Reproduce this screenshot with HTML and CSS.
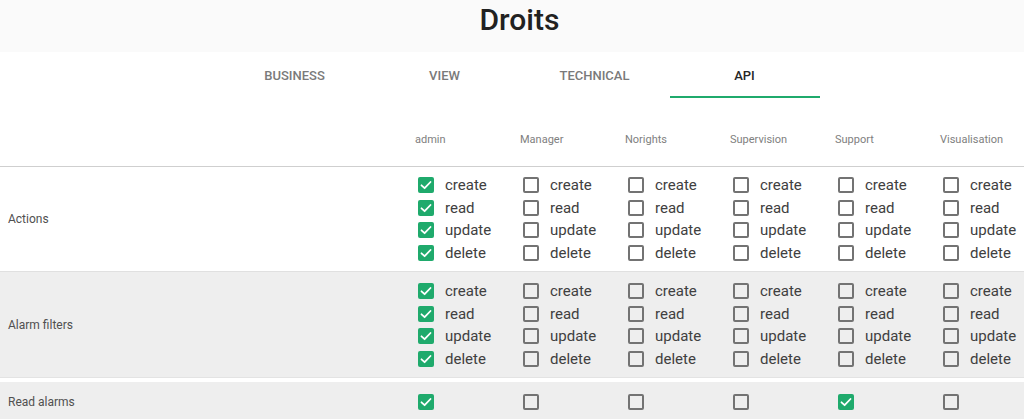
FILE: index.html
```html
<!DOCTYPE html>
<html lang="fr">
<head>
<meta charset="utf-8">
<title>Droits</title>
<link rel="stylesheet" href="styles.css">
</head>
<body>
<div class="page">
  <header class="title-bar"><h1 class="title">Droits</h1></header>
  <nav class="tabs">
    <div class="tab">BUSINESS</div>
    <div class="tab">VIEW</div>
    <div class="tab">TECHNICAL</div>
    <div class="tab active">API</div>
  </nav>
  <div class="table">
    <div class="row head">
      <div class="cell label"></div>
      <div class="cell hcell">admin</div>
      <div class="cell hcell">Manager</div>
      <div class="cell hcell">Norights</div>
      <div class="cell hcell">Supervision</div>
      <div class="cell hcell">Support</div>
      <div class="cell hcell">Visualisation</div>
    </div>

    <div class="row group">
      <div class="cell label">Actions</div>
      <div class="cell checks">
        <div class="item"><span class="box on"><svg viewBox="0 0 16 16"><polyline points="3.5,8.3 6.6,11.2 12.5,5"/></svg></span><span class="txt">create</span></div>
        <div class="item"><span class="box on"><svg viewBox="0 0 16 16"><polyline points="3.5,8.3 6.6,11.2 12.5,5"/></svg></span><span class="txt">read</span></div>
        <div class="item"><span class="box on"><svg viewBox="0 0 16 16"><polyline points="3.5,8.3 6.6,11.2 12.5,5"/></svg></span><span class="txt">update</span></div>
        <div class="item"><span class="box on"><svg viewBox="0 0 16 16"><polyline points="3.5,8.3 6.6,11.2 12.5,5"/></svg></span><span class="txt">delete</span></div>
      </div>
      <div class="cell checks">
        <div class="item"><span class="box"></span><span class="txt">create</span></div>
        <div class="item"><span class="box"></span><span class="txt">read</span></div>
        <div class="item"><span class="box"></span><span class="txt">update</span></div>
        <div class="item"><span class="box"></span><span class="txt">delete</span></div>
      </div>
      <div class="cell checks">
        <div class="item"><span class="box"></span><span class="txt">create</span></div>
        <div class="item"><span class="box"></span><span class="txt">read</span></div>
        <div class="item"><span class="box"></span><span class="txt">update</span></div>
        <div class="item"><span class="box"></span><span class="txt">delete</span></div>
      </div>
      <div class="cell checks">
        <div class="item"><span class="box"></span><span class="txt">create</span></div>
        <div class="item"><span class="box"></span><span class="txt">read</span></div>
        <div class="item"><span class="box"></span><span class="txt">update</span></div>
        <div class="item"><span class="box"></span><span class="txt">delete</span></div>
      </div>
      <div class="cell checks">
        <div class="item"><span class="box"></span><span class="txt">create</span></div>
        <div class="item"><span class="box"></span><span class="txt">read</span></div>
        <div class="item"><span class="box"></span><span class="txt">update</span></div>
        <div class="item"><span class="box"></span><span class="txt">delete</span></div>
      </div>
      <div class="cell checks">
        <div class="item"><span class="box"></span><span class="txt">create</span></div>
        <div class="item"><span class="box"></span><span class="txt">read</span></div>
        <div class="item"><span class="box"></span><span class="txt">update</span></div>
        <div class="item"><span class="box"></span><span class="txt">delete</span></div>
      </div>
    </div>

    <div class="row group shaded">
      <div class="cell label">Alarm filters</div>
      <div class="cell checks">
        <div class="item"><span class="box on"><svg viewBox="0 0 16 16"><polyline points="3.5,8.3 6.6,11.2 12.5,5"/></svg></span><span class="txt">create</span></div>
        <div class="item"><span class="box on"><svg viewBox="0 0 16 16"><polyline points="3.5,8.3 6.6,11.2 12.5,5"/></svg></span><span class="txt">read</span></div>
        <div class="item"><span class="box on"><svg viewBox="0 0 16 16"><polyline points="3.5,8.3 6.6,11.2 12.5,5"/></svg></span><span class="txt">update</span></div>
        <div class="item"><span class="box on"><svg viewBox="0 0 16 16"><polyline points="3.5,8.3 6.6,11.2 12.5,5"/></svg></span><span class="txt">delete</span></div>
      </div>
      <div class="cell checks">
        <div class="item"><span class="box"></span><span class="txt">create</span></div>
        <div class="item"><span class="box"></span><span class="txt">read</span></div>
        <div class="item"><span class="box"></span><span class="txt">update</span></div>
        <div class="item"><span class="box"></span><span class="txt">delete</span></div>
      </div>
      <div class="cell checks">
        <div class="item"><span class="box"></span><span class="txt">create</span></div>
        <div class="item"><span class="box"></span><span class="txt">read</span></div>
        <div class="item"><span class="box"></span><span class="txt">update</span></div>
        <div class="item"><span class="box"></span><span class="txt">delete</span></div>
      </div>
      <div class="cell checks">
        <div class="item"><span class="box"></span><span class="txt">create</span></div>
        <div class="item"><span class="box"></span><span class="txt">read</span></div>
        <div class="item"><span class="box"></span><span class="txt">update</span></div>
        <div class="item"><span class="box"></span><span class="txt">delete</span></div>
      </div>
      <div class="cell checks">
        <div class="item"><span class="box"></span><span class="txt">create</span></div>
        <div class="item"><span class="box"></span><span class="txt">read</span></div>
        <div class="item"><span class="box"></span><span class="txt">update</span></div>
        <div class="item"><span class="box"></span><span class="txt">delete</span></div>
      </div>
      <div class="cell checks">
        <div class="item"><span class="box"></span><span class="txt">create</span></div>
        <div class="item"><span class="box"></span><span class="txt">read</span></div>
        <div class="item"><span class="box"></span><span class="txt">update</span></div>
        <div class="item"><span class="box"></span><span class="txt">delete</span></div>
      </div>
    </div>

    <div class="row single shaded">
      <div class="cell label">Read alarms</div>
      <div class="cell checks"><span class="box on"><svg viewBox="0 0 16 16"><polyline points="3.5,8.3 6.6,11.2 12.5,5"/></svg></span></div>
      <div class="cell checks"><span class="box"></span></div>
      <div class="cell checks"><span class="box"></span></div>
      <div class="cell checks"><span class="box"></span></div>
      <div class="cell checks"><span class="box on"><svg viewBox="0 0 16 16"><polyline points="3.5,8.3 6.6,11.2 12.5,5"/></svg></span></div>
      <div class="cell checks"><span class="box"></span></div>
    </div>
  </div>
</div>
</body>
</html>
```

FILE: styles.css
```css
html, body {
  margin: 0;
  padding: 0;
  overflow: hidden;
  background: #ffffff;
}

body {
  font-family: Roboto, "Liberation Sans", Arial, sans-serif;
  color: #333333;
}

.page {
  width: 1039px;
}

.title-bar {
  background: #fafafa;
  height: 52px;
}

.title {
  margin: 0;
  font-size: 30px;
  font-weight: 500;
  line-height: 40px;
  text-align: center;
  color: #212121;
}

.tabs {
  display: flex;
  justify-content: center;
  height: 46px;
}

.tab {
  width: 150px;
  box-sizing: border-box;
  display: flex;
  align-items: center;
  justify-content: center;
  font-size: 13px;
  font-weight: 500;
  color: #7a7a7a;
  border-bottom: 2px solid transparent;
  padding-top: 2px;
}

.tab.active {
  color: #262626;
  border-bottom-color: #1faa6c;
}

.row {
  display: grid;
  grid-template-columns: 410px repeat(6, 105px);
}

.head {
  border-bottom: 1px solid #cfcfcf;
}

.hcell {
  padding: 34px 0 18px 5px;
  line-height: 16px;
  font-size: 11px;
  font-weight: 400;
  color: #808080;
}

.group {
  border-bottom: 1px solid #e0e0e0;
}

.group .cell {
  padding-top: 7px;
  padding-bottom: 7px;
}

.shaded {
  background: #eeeeee;
}

.group.shaded {
  border-bottom: 1px solid #e3e3e3;
  margin-bottom: 4px;
}

.group.shaded .cell {
  padding-top: 8px;
  padding-bottom: 7px;
}

.label {
  display: flex;
  align-items: center;
  padding-left: 8px;
  font-size: 12px;
  color: #505050;
}

.checks {
  padding-left: 8px;
}

.item {
  display: flex;
  align-items: center;
  height: 22.5px;
}

.txt {
  margin-left: 11px;
  font-size: 15px;
  color: #404040;
}

.box {
  display: block;
  width: 16px;
  height: 16px;
  box-sizing: border-box;
  border: 2px solid #737373;
  border-radius: 2px;
  flex: none;
}

.box.on {
  border: none;
  background: #1faa6c;
}

.box svg {
  display: block;
  width: 16px;
  height: 16px;
  fill: none;
  stroke: #ffffff;
  stroke-width: 1.8;
  stroke-linecap: round;
  stroke-linejoin: round;
}

.single .cell {
  height: 40px;
  box-sizing: border-box;
}

.single .checks {
  display: flex;
  align-items: center;
}
```
